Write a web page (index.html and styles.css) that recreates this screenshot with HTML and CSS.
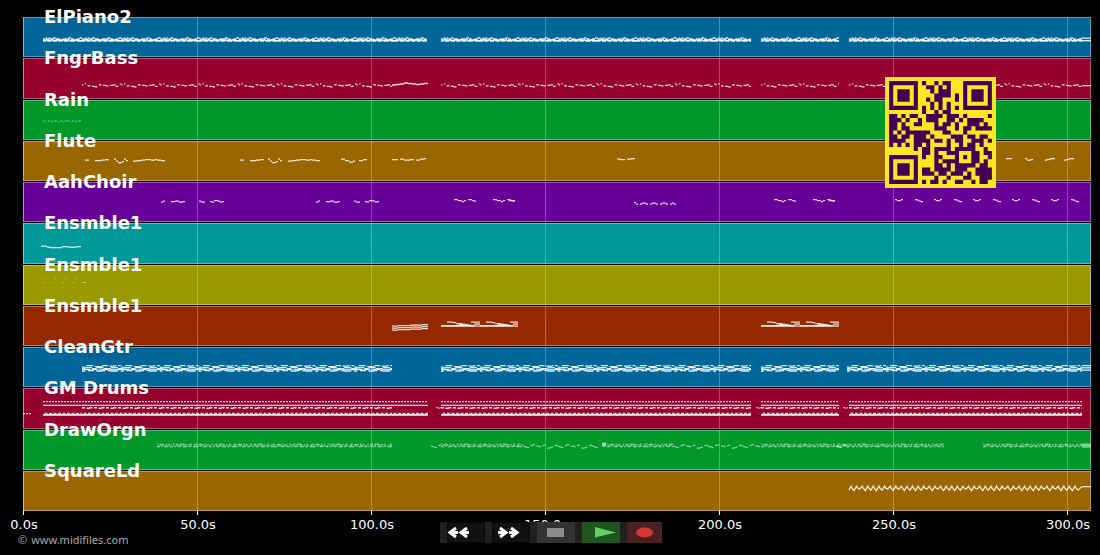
FILE: index.html
```html
<!DOCTYPE html>
<html lang="en">
<head>
    <meta charset="UTF-8">
    <meta name="viewport" content="width=device-width, initial-scale=1.0">
    <title>MIDI Player</title>
    <link rel="stylesheet" href="styles.css">
</head>
<body>
    <main class="tracks" id="tracks"></main>

    <footer class="footer">
        <div class="axis" id="axis"></div>
        <p class="credit"><span>©</span>www.midifiles.com</p>
    </footer>

    <svg class="qr" id="qr" viewBox="0 0 27 27" role="img" aria-label="QR code"></svg>

    <div class="controls">
        <button type="button" class="rewind" aria-label="Rewind">
            <svg viewBox="0 0 38 21"><path d="M9 6L3 10.500L9 15M2 10.500H11M20 6L14 10.500L20 15M13 10.500H22"/></svg>
        </button>
        <button type="button" class="forward" aria-label="Forward">
            <svg viewBox="0 0 38 21"><path d="M8 6L14 10.500L8 15M6 10.500H15M19 6L25 10.500L19 15M17 10.500H26"/></svg>
        </button>
        <button type="button" class="stop" aria-label="Stop">
            <svg viewBox="0 0 38 21"><rect x="10" y="6" width="17" height="9"/></svg>
        </button>
        <button type="button" class="play" aria-label="Play">
            <svg viewBox="0 0 38 21"><path d="M13 5L34 10.500L13 15.500Z"/></svg>
        </button>
        <button type="button" class="record" aria-label="Record">
            <svg viewBox="0 0 35 21"><ellipse cx="17.500" cy="10.500" rx="8.500" ry="5"/></svg>
        </button>
    </div>

    <script src="player.js"></script>
</body>
</html>
```
FILE: styles.css
```css
* {
    box-sizing: border-box;
}
body {
    margin: 0;
    height: 100vh;
    padding: 17px 9px 0 23px;
    display: flex;
    flex-direction: column;
    position: relative;
    overflow: hidden;
    background-color: #000;
    color: #fff;
    font-family: "DejaVu Sans", sans-serif;
}
.tracks {
    flex: 1;
    display: flex;
    flex-direction: column;
    gap: 1px;
}
.track {
    flex: 1;
    min-height: 0;
    position: relative;
    box-shadow: inset 0 0 0 1px rgba(255, 255, 255, 0.35);
}
.track svg {
    position: absolute;
    width: 100%;
    height: 100%;
}
.track h2 {
    position: absolute;
    top: -11px;
    left: 21px;
    z-index: 1;
    margin: 0;
    font-size: 18px;
    line-height: 22px;
}
.grid {
    stroke: #fff;
    stroke-opacity: 0.27;
}
.notes {
    fill: none;
    stroke: #fff;
}
.blue { background-color: #006699; }
.crimson { background-color: #96002f; }
.green { background-color: #009929; }
.orange { background-color: #996600; }
.purple { background-color: #660099; }
.teal { background-color: #009999; }
.olive { background-color: #999900; }
.rust { background-color: #962800; }

.footer {
    height: 44px;
}
.axis {
    display: grid;
    grid-template-columns: repeat(6, minmax(0, 174fr)) minmax(0, 24fr);
    height: 22px;
    font-size: 13px;
    line-height: 16px;
}
.tick {
    border-left: 1px solid #fff;
    height: 4px;
}
.tick span {
    display: block;
    width: max-content;
    padding-top: 6px;
    transform: translateX(-50%);
}
.credit {
    margin: 0 0 0 -5px;
    color: #aaa;
    font-family: "Noto Sans", sans-serif;
    font-size: 11px;
    line-height: 14px;
}
.credit span {
    margin-right: 4px;
}

.qr {
    position: absolute;
    top: 77px;
    right: 104px;
    width: 111px;
    height: 111px;
    background-color: #fde725;
    fill: #440154;
}

.controls {
    position: absolute;
    bottom: 12px;
    left: 50%;
    transform: translateX(-50%);
    margin-left: 1px;
    display: flex;
    gap: 7px;
    padding-left: 7px;
    background-color: #202020;
}
.controls button {
    width: 38px;
    height: 21px;
    padding: 0;
    border: none;
    background-color: #111;
    cursor: pointer;
}
.controls svg {
    display: block;
    width: 100%;
    height: 100%;
}
.controls .rewind,
.controls .forward {
    box-shadow: inset 0 0 0 1px #060606;
    stroke: #fff;
    stroke-width: 3;
}
.controls .rewind svg,
.controls .forward svg {
    fill: none;
}
.controls .stop {
    background-color: #333;
    fill: #8c8c8c;
}
.controls .play {
    background-color: #1f561f;
    fill: #62cf62;
}
.controls .record {
    width: 35px;
    background-color: #4a2020;
    fill: #d43636;
}
```
FILE: player.js
```js
// Places are in units of a 1068 x 40 band, 3.48 units per second.
// A voice is [from, to, y, step, pattern, line width, opacity]. Each digit of
// the pattern lowers the note from y by half a unit, a dot is a rest.
const PIANO_A = '2202022002224422220022442200';
const PIANO_B = '6646664666466646664666646666';
const PIANO_C = '0.000.00.0000..00.0.00.000..';
const BASS = '2.0.44.5566.22.3344.332255.0';
const GTR_A = '33.00000.222220000.11110.00';
const GTR_B = '664444466644444666664444466';
const GTR_C = 'cc99bbbb99ccccbb99bbccccc99';
const GTR_D = '888888.8888.888888.88888888';
const ORGAN_A = '0.101.0.1..0.10.0001.1.0..1';
const ORGAN_B = '55.4.554.55.5.454.555.54.55';
const LONG = [[418, 728], [738, 816]];

function each(parts, voices) {
    return parts.flatMap(([a, b]) => voices.map(v => [a, b, ...v]));
}

function phrases(starts, y, pattern) {
    return starts.map(x => [x, x + pattern.length * 2, y, 2, pattern, 1.3, 0.85]);
}

const drums = [[13.5, 1, '00.', 1.3, 0.85], [17.3, 8, '0', 1.4, 0.85], [19.6, 1.5, '00.1100.', 1.4, 0.9],
    [25.2, 1.5, '.00', 1.3, 0.8], [26.7, 2, '0', 1.6, 0.95]];
const piano = [[20.8, 1.4, PIANO_A, 1.4, 0.85], [20.8, 1.4, PIANO_B, 1.7, 0.95],
    [22.5, 1.4, PIANO_C, 1.4, 0.7]];
const guitar = [[18.5, 1.44, GTR_A, 1.4, 0.9], [18.5, 1.44, GTR_B, 1.2, 0.85],
    [18.3, 1.44, GTR_D, 1.2, 0.75], [17.8, 1.44, GTR_C, 1.4, 0.9]];
const organ = [[14, 1.44, ORGAN_A, 1.2, 0.5], [14, 1.44, ORGAN_B, 1.2, 0.55], [15.2, 1.44, '.00.0.0', 1, 0.45]];
const strings = [[20, 4, '0', 1.4, 0.85], [18, 3, '3333333333300', 1.2, 0.85],
    [16, 3, '..00135667000', 1.3, 0.85], [17.5, 3, '......0123...', 1.2, 0.85]];

const tracks = [
    ['ElPiano2', 'blue', [
        ...each([[20, 404], ...LONG, [826, 1059]], piano),
        [1059, 1068, 21, 9, '0', 1.2, 0.9], [1059, 1068, 23.5, 9, '0', 1.4, 0.9]]],
    ['FngrBass', 'crimson', [
        ...each([[59, 369], ...LONG, [826, 1059]], [[25.7, 1.4, BASS, 1.4, 0.85]]),
        [369, 405, 24.8, 2, '44332200112233221100', 1.4, 0.85],
        [1059, 1068, 27.5, 9, '0', 1.3, 0.85]]],
    ['Rain', 'green', [[20, 58, 20.5, 1, '10.2.10.21.0', 1, 0.5]]],
    ['Flute', 'orange', [
        ...phrases([62, 217], 18, '22.'),
        ...phrases([72, 227], 18, '3332211'), ...phrases([91, 245], 18, '0477503'),
        ...phrases([110, 265], 18, '4433221112212233'),
        ...phrases([318], 18, '0033664'), ...phrases([336], 18, '3311'),
        ...phrases([369], 17.5, '222.1133322.33110'),
        ...phrases([594], 17, '2233.2211'),
        ...phrases([983], 17, '111'), ...phrases([1002], 17, '1443'),
        ...phrases([1022, 1041], 17, '43211')]],
    ['AahChoir', 'purple', [
        ...phrases([138, 293], 18, '42'), ...phrases([148, 303], 18, '3322443'),
        ...phrases([176, 331], 18, '244'), ...phrases([187, 342], 18, '3411243'),
        ...phrases([431, 470, 751, 790], 17, '113353'), ...phrases([445, 765], 17, '1134'),
        ...phrases([484, 804], 17, '1133'), ...phrases([486, 806], 17, '334'),
        ...phrases([611], 20, '14.4224.4224.4224.424')
        , ...phrases([872, 911, 950, 989, 1028], 17, '1331'),
        ...phrases([892, 931, 970, 1009, 1048], 17, '1245')]],
    ['Ensmble1', 'teal', [[18, 58, 23, 3, '00233331122211', 1.4, 0.85]]],
    ['Ensmble1', 'olive', [
        [22, 60, 13.5, 1, '0.........', 1, 0.45], [20, 60, 17.5, 1, '0.........', 1, 0.45],
        [60, 63, 17.5, 1, '0', 1, 0.6]]],
    ['Ensmble1', 'rust', [
        ...[18, 20, 22].map(y => [369, 405, y, 6, '433221', 1.4, 0.85]),
        ...each([[418, 495], [738, 816]], strings)]],
    ['CleanGtr', 'blue', [
        ...each([[59, 369], ...LONG, [824, 1059]], guitar),
        ...[18.5, 20.7, 23].map(y => [1059, 1068, y, 9, '0', 1.3, 0.9])]],
    ['GM Drums', 'crimson', [
        [0, 9, 25.5, 1, '00.', 1.1, 0.8],
        ...each([[20, 59]], [drums[0], drums[1], drums[4], drums[3]]),
        ...each([[59, 369]], drums), ...each([[369, 405]], [drums[0], drums[1], drums[3], drums[4]]),
        ...each([...LONG, [826, 1059]], drums),
        ...[413, 733, 820].map(x => [x, x + 5, 19.5, 2, '01', 1.2, 0.6])]],
    ['DrawOrgn', 'green', [
        ...each([[134, 369], [418, 500], [584, 650], [738, 921], [960, 1059]], organ),
        ...[[408, 418], [500, 576], [650, 738], [813, 824]].map(
            ([a, b]) => [a, b, 14.5, 1.5, '3456.210.334.21.7765.21', 1.2, 0.55]),
        [579, 583, 14.5, 4, '0', 4, 0.6],
        ...[14, 15.5, 17].map(y => [1059, 1068, y, 9, '0', 1.2, 0.6])]],
    ['SquareLd', 'orange', []]
];

function draw([from, to, y, step, pattern, width, opacity]) {
    let d = '';
    for (let i = 0, x = from; x < to; i++, x = from + i * step) {
        const c = pattern[i % pattern.length];
        if (c === '.') continue;
        d += `M${x} ${y + parseInt(c, 16) / 2}H${Math.min(x + step, to)}`;
    }
    return `<path class="notes" d="${d}" stroke-width="${width}" stroke-opacity="${opacity}"/>`;
}

// The lead is one unbroken zigzag
function drawLead() {
    let d = 'M826 19';
    for (let x = 826, i = 0; x < 1054; x += 5.6, i++) {
        const low = [19.5, 18, 19.5, 19, 19.5, 19, 18][i % 7];
        d += `L${x + 2} 15L${x + 3} 17L${x + 5} ${low}`;
    }
    return `<path class="notes" d="${d}L1059 15.5H1068" stroke-width="1.300" stroke-opacity="0.850"/>`;
}

const gridLines = [0, 174, 348, 522, 696, 870, 1044].map(x => `M${x + 0.5} 0V40`).join('');

document.getElementById('tracks').innerHTML = tracks.map(([name, color, voices]) => `
    <section class="track ${color}">
        <h2>${name}</h2>
        <svg viewBox="0 0 1068 40" preserveAspectRatio="none" aria-hidden="true">
            <path class="grid" d="${gridLines}"/>
            ${voices.map(draw).join('')}${name === 'SquareLd' ? drawLead() : ''}
        </svg>
    </section>`).join('');

document.getElementById('axis').innerHTML = [0, 50, 100, 150, 200, 250, 300]
    .map(s => `<div class="tick"><span>${s.toFixed(1)}s</span></div>`).join('');

const code = [
    '#######.#..#.##...#######',
    '#.....#..##.#.#...#.....#',
    '#.###.#...#.###...#.###.#',
    '#.###.#....####.#.#.###.#',
    '#.###.#..#.##...#.#.###.#',
    '#.....#...#.#.#...#.....#',
    '#######.#.#.#.#.#.#######',
    '........#..#.##..........',
    '##.#.##..####.###.#.....#',
    '###.#..#.###..##.#.####..',
    '##.#..##...#.##.#..###.#.',
    '##.##......###..#.##.####',
    '#.#.######...##...#......',
    '##.##.###.#....###.##.##.',
    '####..####.##.#.##..###.#',
    '#.#.#.##.#....#..#.##.#..',
    '......#.##.####.#####..#.',
    '........##.#..###...##.##',
    '#######.#..##...#.#.##..#',
    '#.....#....#.####...##.#.',
    '#.###.#....##.#.#####.##.',
    '#.###.#.##.####.###..####',
    '#.###.#.###.##.###.#.####',
    '#.....#....#..#...##..###',
    '#######.#.##.#..##..#.##.'
];
let modules = '';
code.forEach((row, y) => [...row].forEach((c, x) => {
    if (c === '#') modules += `M${x + 1} ${y + 1}h1v1h-1z`;
}));
document.getElementById('qr').innerHTML = `<path d="${modules}"/>`;
```
